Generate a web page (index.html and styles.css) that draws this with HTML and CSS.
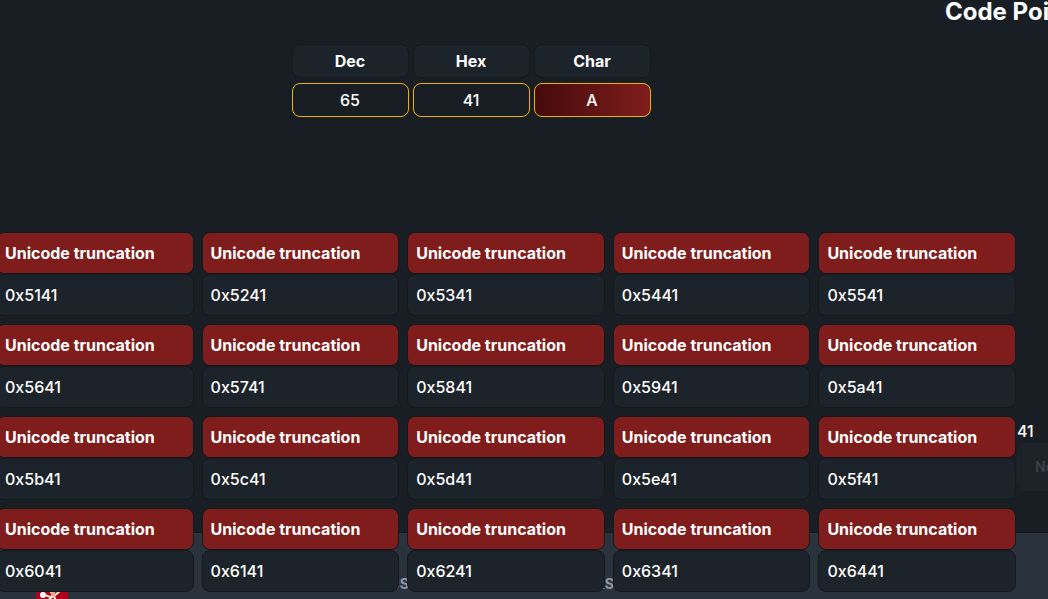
FILE: index.html
```html
<!DOCTYPE html>
<html lang="en">

<head>
    <meta charset="UTF-8">
    <meta name="viewport" content="width=device-width, initial-scale=1.0">
    <title>Code Points</title>
    <link rel="stylesheet" href="styles.css">
</head>

<body>
    <main>
        <table class="codes">
            <thead>
                <tr>
                    <th>Dec</th>
                    <th>Hex</th>
                    <th>Char</th>
                </tr>
            </thead>
            <tbody>
                <tr>
                    <td>65</td>
                    <td>41</td>
                    <td class="char">A</td>
                </tr>
            </tbody>
        </table>
        <section class="points">
            <h2>Code Points</h2>
            <div class="pager">
                <p>41</p>
                <button type="button" disabled>Next</button>
            </div>
        </section>
    </main>
    <footer>
        <svg class="logo" viewBox="0 0 32 32" aria-hidden="true">
            <rect width="32" height="32" fill="#b0001e"/>
            <circle cx="7" cy="9" r="3" fill="#fff"/>
            <path d="M9 9l5 2 4-1 6-5M14 5l3 4M13 13l5-3 2 5" fill="none" stroke="#fbe9d8" stroke-width="2"/>
            <path d="M15 6h4v4h-4z" fill="#e9a58c"/>
        </svg>
        <h4>Us</h4>
        <h4>Links</h4>
    </footer>
    <!-- truncation list, opens over the page -->
    <div class="results"></div>
    <script>
        var results = document.querySelector('.results');
        for (var i = 0x51; i <= 0x64; i++) {
            var card = document.createElement('div');
            card.className = 'card';
            card.innerHTML = '<h3>Unicode truncation</h3><p>0x' + i.toString(16) + '41</p>';
            results.appendChild(card);
        }
    </script>
</body>

</html>
```

FILE: styles.css
```css
* {
    margin: 0;
    padding: 0;
    box-sizing: border-box;
}

body {
    position: relative;
    display: flex;
    flex-direction: column;
    height: 100vh;
    overflow: hidden;
    background: #191e24;
    color: #fff;
    font: 500 16px/24px Inter, sans-serif;
}

main {
    flex: 1;
    display: grid;
    grid-template-columns: 1fr 106px;
}

.codes {
    align-self: start;
    justify-self: center;
    margin-top: 39px;
    border-spacing: 4px 5px;
    table-layout: fixed;
    width: 367px;
}

.codes th,
.codes td {
    height: 34px;
    border: 1px solid #15191e;
    border-radius: 8px;
    text-align: center;
}

.codes th {
    background: #1d232a;
    font-weight: 700;
}

.codes td {
    border-color: #eab308;
}

.codes .char {
    background: linear-gradient(to right, #450a0a, #7f1d1d);
}

.points {
    display: flex;
    flex-direction: column;
    justify-content: space-between;
    padding: 0 0 41px 3px;
    white-space: nowrap;
}

.points h2 {
    font-size: 24px;
    line-height: 24px;
}

.pager {
    padding-left: 72px;
}

.pager button {
    display: block;
    height: 48px;
    padding: 0 17px;
    border: 1px solid #1c2228;
    border-radius: 8px;
    background: #1c2228;
    color: #383f47;
    font: 700 14px/14px Inter, sans-serif;
}

footer {
    display: grid;
    grid-template-columns: 32px 325px 189px;
    gap: 16px;
    height: 67px;
    padding: 39px 36px 0;
    overflow: hidden;
    border-top: 1px solid #15191e;
    background: #2a323c;
}

.logo {
    width: 32px;
    height: 32px;
    margin-top: 14px;
}

footer h4 {
    color: #9399a3;
    font-size: 14px;
    text-align: right;
    text-transform: uppercase;
}

.results {
    position: absolute;
    top: 232px;
    left: -4px;
    right: 32px;
    display: grid;
    grid-template-columns: repeat(5, 1fr);
    gap: 8px;
}

.card h3,
.card p {
    height: 42px;
    padding: 8px;
    border: 1px solid #15191e;
    border-radius: 8px;
    font-size: 16px;
}

.card h3 {
    background: #7f1d1d;
    font-weight: 700;
}

.card p {
    background: #1d232a;
}
```
